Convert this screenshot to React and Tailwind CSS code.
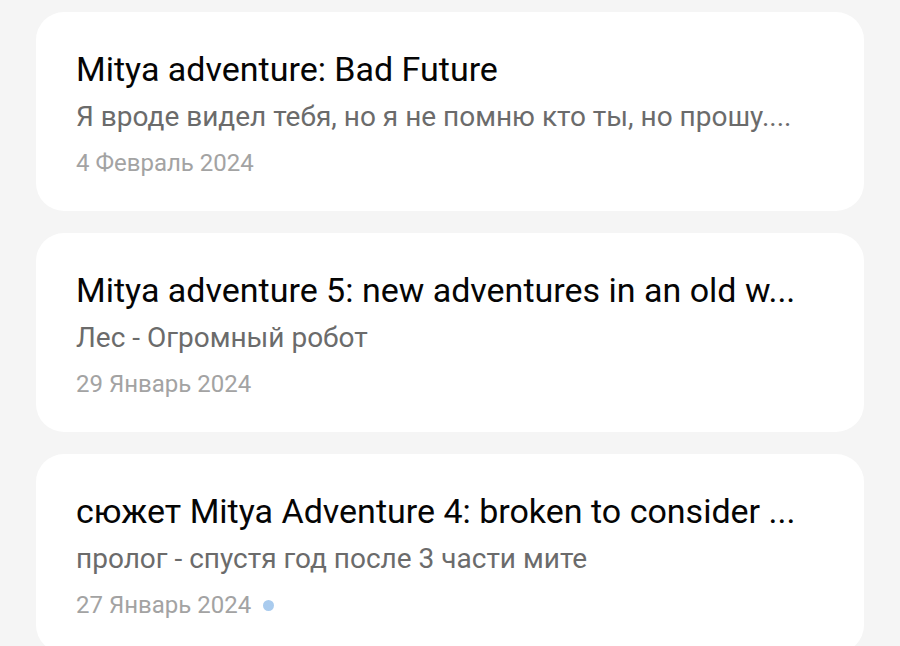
import React from 'react';

const notes = [
  {
    title: 'Mitya adventure: Bad Future',
    preview: 'Я вроде видел тебя, но я не помню кто ты, но прошу....',
    date: '4 Февраль 2024',
  },
  {
    title: 'Mitya adventure 5: new adventures in an old w...',
    preview: 'Лес - Огромный робот',
    date: '29 Январь 2024',
  },
  {
    title: 'сюжет Mitya Adventure 4: broken to consider ...',
    preview: 'пролог - спустя год после 3 части мите',
    date: '27 Январь 2024',
    unread: true,
  },
];

function NoteCard({ note }) {
  return (
    <div className="bg-white rounded-[28px] h-[199px] pl-[40px] pr-6 pt-[37px] shrink-0">
      <div className="text-[34px] leading-[40px] text-[#050505] whitespace-nowrap">{note.title}</div>
      <div className="text-[28px] leading-[36px] text-[#6b6b6b] mt-[10px] whitespace-nowrap">{note.preview}</div>
      <div className="flex items-center gap-[12px] mt-[13px]">
        <span className="text-[24px] leading-[30px] text-[#a3a3a3]">{note.date}</span>
        {note.unread && <span className="w-[11px] h-[11px] rounded-full bg-[#a9cbee]" />}
      </div>
    </div>
  );
}

export default function App() {
  return (
    <div
      className="w-[900px] h-[646px] overflow-hidden bg-[#f5f5f5] px-[36px] pt-[12px] flex flex-col gap-[22px]"
      style={{ fontFamily: 'Roboto, "Noto Sans", sans-serif' }}
    >
      {notes.map((n, i) => (
        <NoteCard key={i} note={n} />
      ))}
    </div>
  );
}
